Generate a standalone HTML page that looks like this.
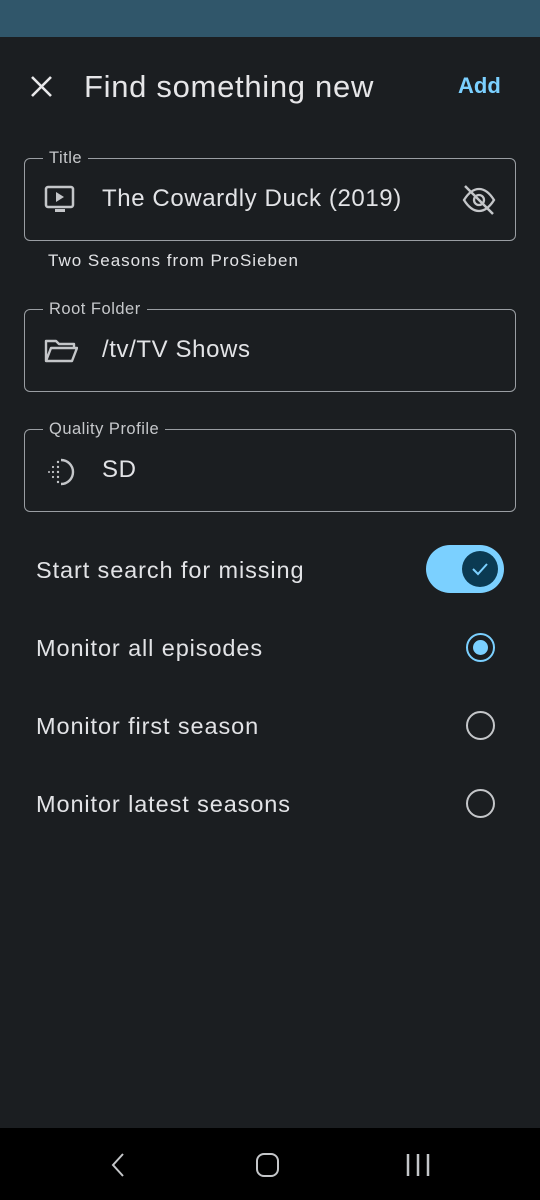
<!DOCTYPE html>
<html><head><meta charset="utf-8"><style>
*{margin:0;padding:0;box-sizing:border-box}
body{width:540px;height:1200px;background:#1b1e21;font-family:"Liberation Sans",sans-serif;color:#e2e3e6;position:relative;overflow:hidden}
.a{position:absolute;white-space:nowrap}
.box{position:absolute;left:24px;width:492px;height:83px;border:1.5px solid #9a9ea3;border-radius:6px}
.lbl{position:absolute;left:18px;top:-11px;background:#1b1e21;padding:0 6px;font-size:16.5px;letter-spacing:0.5px;color:#c6c8cb;line-height:20px}
.val{position:absolute;left:77px;top:26px;font-size:24px;letter-spacing:0.6px;line-height:28px}
.row{position:absolute;left:36px;font-size:23.5px;letter-spacing:0.9px;line-height:28px}
.radio{position:absolute;left:466px;width:29px;height:29px;border-radius:50%;border:2.5px solid #c4c6c9}
</style></head><body>
<div class="a" style="left:0;top:0;width:540px;height:37px;background:#30566a"></div>
<svg class="a" style="left:29px;top:74px" width="25" height="25" viewBox="0 0 25 25"><path d="M3 3L22 22M22 3L3 22" stroke="#e8e8ea" stroke-width="2.6"/></svg>
<div class="a" style="left:84px;top:70px;font-size:31px;letter-spacing:0.7px;line-height:34px;color:#e6e6e8">Find something new</div>
<div class="a" style="left:458px;top:73px;font-size:22px;font-weight:bold;color:#7bd0ff">Add</div>

<div class="box" style="top:158px"><div class="lbl">Title</div>
<svg class="a" style="left:19px;top:25px" width="32" height="32" viewBox="0 0 32 32"><rect x="2" y="3" width="27" height="20" rx="2" fill="none" stroke="#c4c6c9" stroke-width="2.5"/><path d="M12 8L20 13L12 18Z" fill="#c4c6c9"/><rect x="11" y="25" width="10" height="3" fill="#c4c6c9"/></svg>
<div class="val">The Cowardly Duck (2019)</div>
<svg class="a" style="left:436px;top:24px" width="36" height="34" viewBox="0 0 36 34"><path d="M3 17C8 9 13 6 18 6S28 9 33 17C28 25 23 28 18 28S8 25 3 17Z" fill="none" stroke="#c4c6c9" stroke-width="2.3"/><circle cx="18" cy="17" r="5" fill="none" stroke="#c4c6c9" stroke-width="2.3"/><path d="M4 3L32 31" stroke="#c4c6c9" stroke-width="2.5"/></svg>
</div>
<div class="a" style="left:48px;top:251px;font-size:17px;letter-spacing:1px;color:#e2e3e6">Two Seasons from ProSieben</div>

<div class="box" style="top:309px"><div class="lbl">Root Folder</div>
<svg class="a" style="left:19px;top:27px" width="34" height="28" viewBox="0 0 34 28"><path d="M2 24V4H12L15 7H30V11M2 24L7 11H33L28 24Z" fill="none" stroke="#c4c6c9" stroke-width="2.4" stroke-linejoin="round"/></svg>
<div class="val">/tv/TV Shows</div>
</div>

<div class="box" style="top:429px"><div class="lbl">Quality Profile</div>
<svg class="a" style="left:19px;top:27px" width="34" height="30" viewBox="0 0 34 30"><path d="M17 3A12 12 0 0 1 17 27" fill="none" stroke="#c4c6c9" stroke-width="2.4"/><g fill="#c4c6c9"><circle cx="14" cy="5" r="1.2"/><circle cx="14" cy="10" r="1.2"/><circle cx="14" cy="15" r="1.2"/><circle cx="14" cy="20" r="1.2"/><circle cx="14" cy="25" r="1.2"/><circle cx="9" cy="10" r="1.1"/><circle cx="9" cy="15" r="1.1"/><circle cx="9" cy="20" r="1.1"/><circle cx="5" cy="15" r="1"/></g></svg>
<div class="val">SD</div>
</div>

<div class="row" style="top:556px">Start search for missing</div>
<div class="a" style="left:426px;top:545px;width:78px;height:48px;border-radius:24px;background:#7bd0ff"></div>
<div class="a" style="left:462px;top:551px;width:36px;height:36px;border-radius:50%;background:#0b3a52"></div>
<svg class="a" style="left:470px;top:559px" width="20" height="20" viewBox="0 0 20 20"><path d="M3 10L8 15L17 5" fill="none" stroke="#7bd0ff" stroke-width="2"/></svg>

<div class="row" style="top:634px">Monitor all episodes</div>
<div class="radio" style="top:633px;border-color:#7bd0ff"></div>
<div class="a" style="left:473px;top:640px;width:15px;height:15px;border-radius:50%;background:#7bd0ff"></div>
<div class="row" style="top:712px">Monitor first season</div>
<div class="radio" style="top:711px"></div>
<div class="row" style="top:790px">Monitor latest seasons</div>
<div class="radio" style="top:789px"></div>

<div class="a" style="left:0;top:1128px;width:540px;height:72px;background:#000"></div>
<svg class="a" style="left:108px;top:1152px" width="20" height="26" viewBox="0 0 20 26"><path d="M15 2L5 13L15 24" fill="none" stroke="#c4c6c9" stroke-width="2"/></svg>
<div class="a" style="left:256px;top:1153px;width:23px;height:24px;border:2.5px solid #c4c6c9;border-radius:8px"></div>
<svg class="a" style="left:405px;top:1152px" width="28" height="26" viewBox="0 0 28 26"><path d="M3 2V24M13 2V24M23 2V24" stroke="#c4c6c9" stroke-width="2.5"/></svg>
</body></html>
